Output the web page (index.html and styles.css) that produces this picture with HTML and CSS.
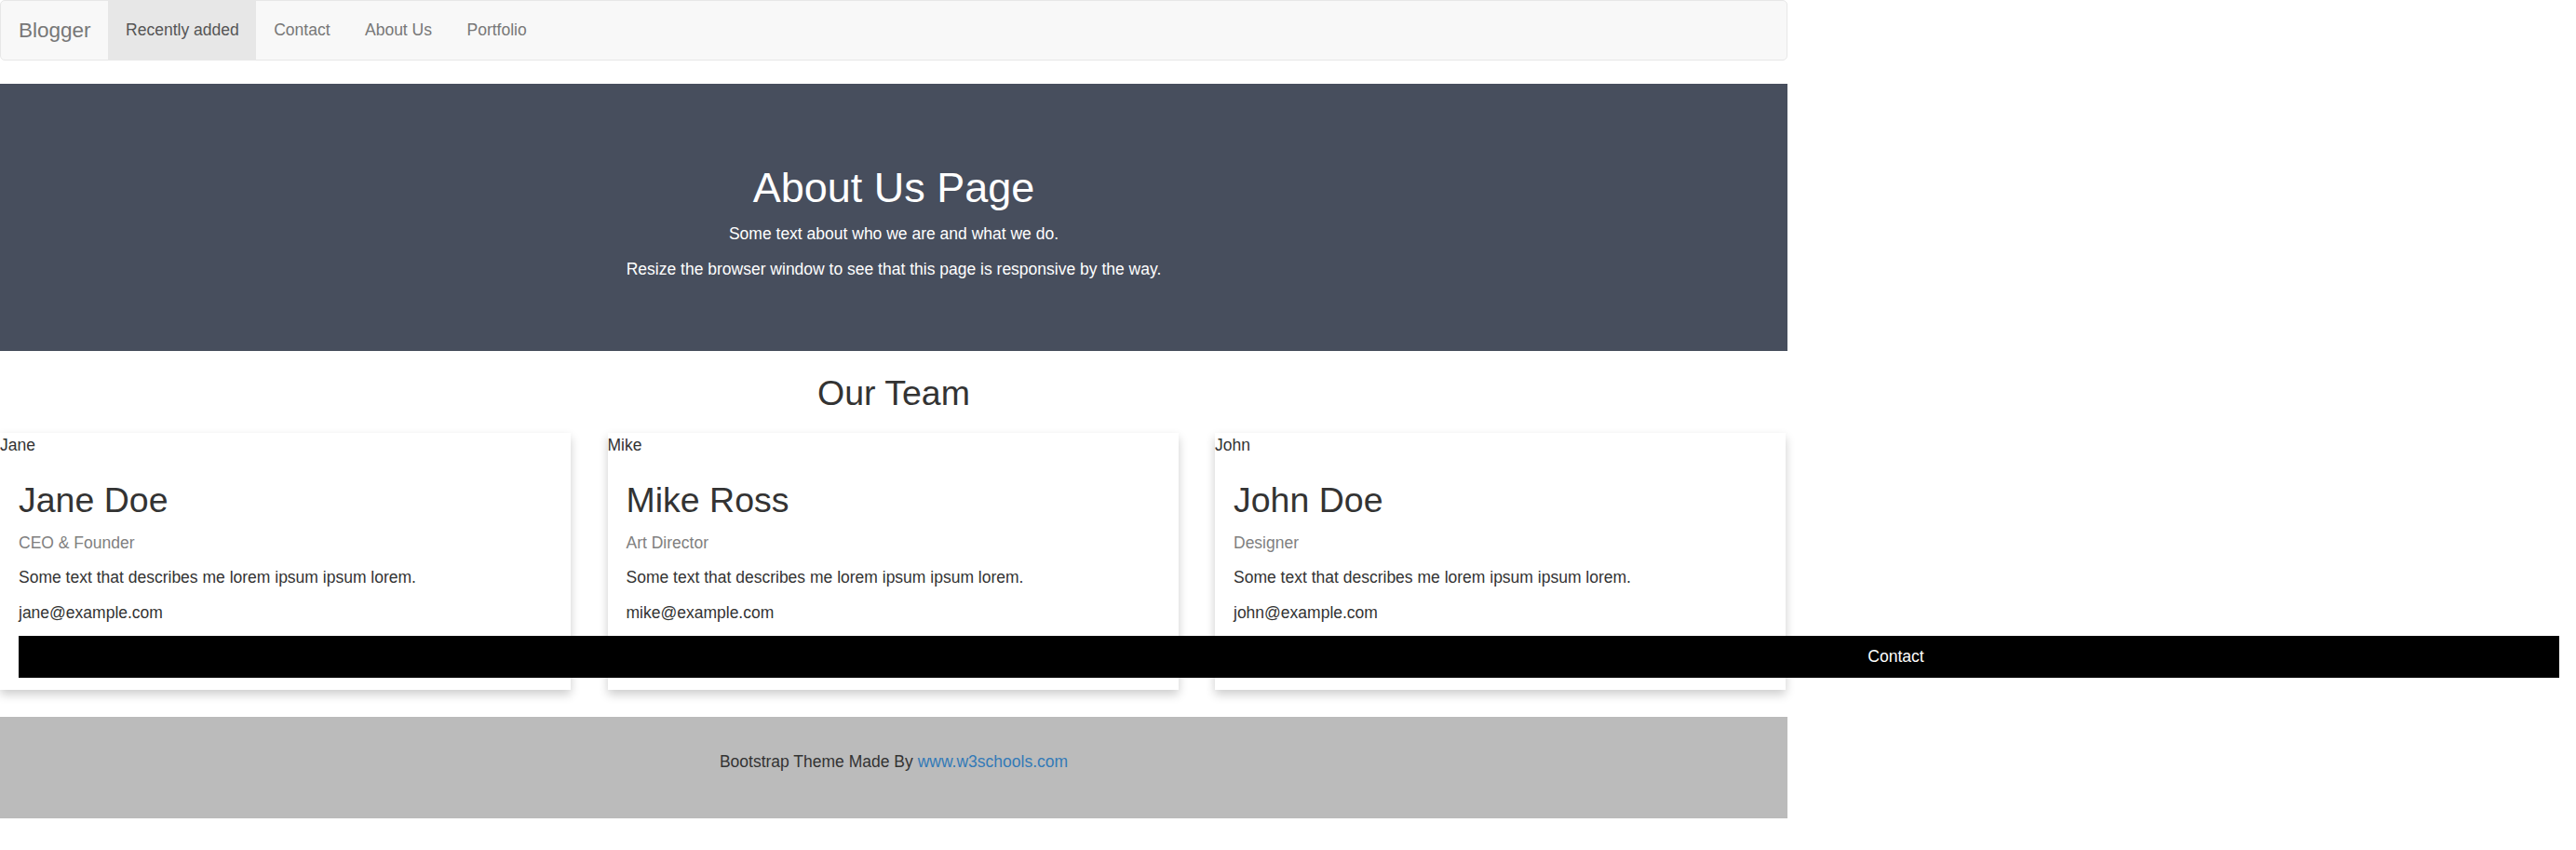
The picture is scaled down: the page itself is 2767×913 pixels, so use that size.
FILE: index.html
```html
<!DOCTYPE html>
<html lang="en">
<head>
<meta charset="utf-8">
<title>About Us Page</title>
<link rel="stylesheet" href="styles.css">
</head>
<body>
<div class="page">
  <nav class="navbar">
    <a class="brand" href="#">Blogger</a>
    <ul class="nav">
      <li class="active"><a href="#">Recently added</a></li>
      <li><a href="#">Contact</a></li>
      <li><a href="#">About Us</a></li>
      <li><a href="#">Portfolio</a></li>
    </ul>
  </nav>

  <section class="about">
    <h1>About Us Page</h1>
    <p>Some text about who we are and what we do.</p>
    <p>Resize the browser window to see that this page is responsive by the way.</p>
  </section>

  <h2 class="team-title">Our Team</h2>

  <div class="team">
    <div class="card">
      <div class="alt">Jane</div>
      <div class="card-body">
        <h2>Jane Doe</h2>
        <p class="role">CEO &amp; Founder</p>
        <p>Some text that describes me lorem ipsum ipsum lorem.</p>
        <p>jane@example.com</p>
        <p><button class="button">Contact</button></p>
      </div>
    </div>
    <div class="card">
      <div class="alt">Mike</div>
      <div class="card-body">
        <h2>Mike Ross</h2>
        <p class="role">Art Director</p>
        <p>Some text that describes me lorem ipsum ipsum lorem.</p>
        <p>mike@example.com</p>
      </div>
    </div>
    <div class="card">
      <div class="alt">John</div>
      <div class="card-body">
        <h2>John Doe</h2>
        <p class="role">Designer</p>
        <p>Some text that describes me lorem ipsum ipsum lorem.</p>
        <p>john@example.com</p>
      </div>
    </div>
  </div>

  <footer class="footer">
    <p>Bootstrap Theme Made By <a href="#">www.w3schools.com</a></p>
  </footer>
</div>
</body>
</html>
```

FILE: styles.css
```css
html, body {
  margin: 0;
  padding: 0;
  background: #fff;
}

body {
  font-family: "Liberation Sans", Arial, Helvetica, sans-serif;
  font-size: 17.5px;
  line-height: 25px;
  color: #333;
}

.page {
  width: 1920px;
}

p {
  margin: 0 0 12.5px;
}

/* Navbar */
.navbar {
  display: flex;
  align-items: stretch;
  height: 62.5px;
  background: #f8f8f8;
  border: 1px solid #e7e7e7;
  border-radius: 5px;
  margin-bottom: 25px;
  box-sizing: content-box;
}

.brand {
  display: block;
  padding: 18.75px 18.75px 18.75px 19px;
  font-size: 22.5px;
  line-height: 25px;
  color: #777;
  text-decoration: none;
}

.nav {
  display: flex;
  list-style: none;
  margin: 0;
  padding: 0;
}

.nav a {
  display: block;
  padding: 18.75px 18.75px;
  line-height: 25px;
  color: #777;
  text-decoration: none;
}

.nav .active a {
  background: #e7e7e7;
  color: #555;
}

/* About section */
.about {
  background: #474e5d;
  color: #fff;
  text-align: center;
  padding: 62.5px 0;
}

.about h1 {
  font-size: 45px;
  font-weight: 500;
  line-height: 1.1;
  margin: 25px 0 12.5px;
}

/* Team */
.team-title {
  font-size: 37.5px;
  font-weight: 500;
  line-height: 1.1;
  text-align: center;
  margin: 25px 0 21.75px;
}

.team {
  display: grid;
  grid-template-columns: repeat(3, 613px);
  column-gap: 39.5px;
  margin-bottom: 29px;
}

.card {
  background: #fff;
  box-shadow: 0 5px 10px 0 rgba(0, 0, 0, 0.2);
}

.alt {
  line-height: 27.5px;
}

.card-body {
  padding: 0 20px;
}

.card-body h2 {
  font-size: 37.5px;
  font-weight: 500;
  line-height: 1.1;
  margin: 25px 0 12.5px;
}

.role {
  color: #808080;
}

.button {
  display: block;
  position: relative;
  z-index: 1;
  box-sizing: border-box;
  width: 2729px;
  border: none;
  margin: 0;
  padding: 10px 0 10px 1304px;
  background: #000;
  color: #fff;
  font-family: inherit;
  font-size: 17.5px;
  line-height: 25px;
  text-align: center;
  cursor: pointer;
}

/* Footer */
.footer {
  background: #bbb;
  text-align: center;
  padding: 36px 0 35.5px;
}

.footer a {
  color: #337ab7;
  text-decoration: none;
}
```
